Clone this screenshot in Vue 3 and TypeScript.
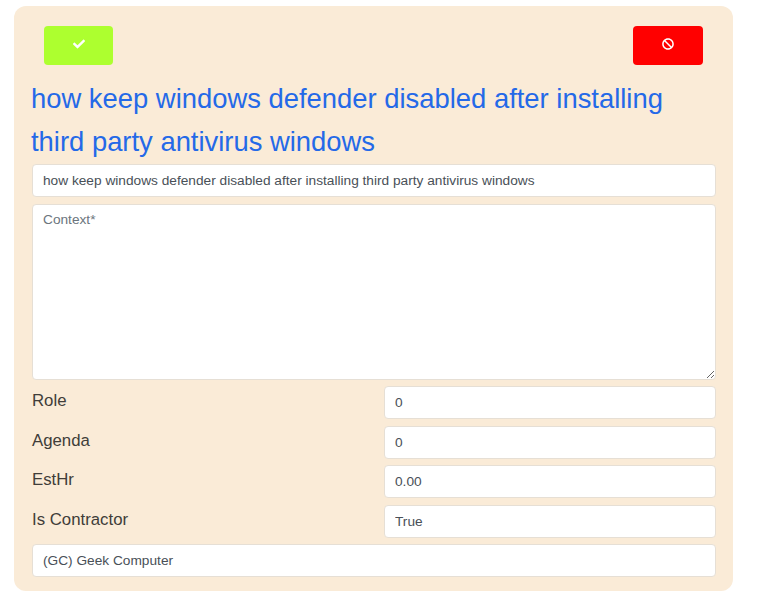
<script setup lang="ts">
const title = "how keep windows defender disabled after installing third party antivirus windows";

const fields = [
  { label: "Role", value: "0" },
  { label: "Agenda", value: "0" },
  { label: "EstHr", value: "0.00" },
  { label: "Is Contractor", value: "True" }
];
</script>

<template>
  <div class="page">
    <form class="card" @submit.prevent>
      <div class="actions">
        <button type="button" class="action-button approve">
          <svg class="icon" viewBox="0 0 512 512">
            <path d="M173.898 439.404l-166.4-166.4c-9.997-9.997-9.997-26.206 0-36.204l36.203-36.204c9.997-9.998 26.207-9.998 36.204 0L192 312.69 432.095 72.596c9.997-9.997 26.207-9.997 36.204 0l36.203 36.204c9.997 9.997 9.997 26.206 0 36.204l-294.4 294.401c-9.998 9.997-26.207 9.997-36.204-.001z" />
          </svg>
        </button>
        <button type="button" class="action-button reject">
          <svg class="icon" viewBox="0 0 512 512">
            <path d="M256 8C119.034 8 8 119.033 8 256s111.034 248 248 248 248-111.034 248-248S392.967 8 256 8zm130.108 117.892c65.448 65.448 70 165.481 20.677 235.637L150.47 105.216c70.204-49.356 170.226-44.735 235.638 20.676zM125.892 386.108c-65.448-65.448-70-165.481-20.677-235.637L361.53 406.784c-70.203 49.356-170.226 44.736-235.638-20.676z" />
          </svg>
        </button>
      </div>

      <h1 class="title">{{ title }}</h1>

      <input class="control subject" type="text" :value="title" />
      <textarea class="control context" placeholder="Context*"></textarea>

      <div v-for="field in fields" :key="field.label" class="field-row">
        <label class="field-label">{{ field.label }}</label>
        <input class="control" type="text" :value="field.value" />
      </div>

      <input class="control" type="text" value="(GC) Geek Computer" />
    </form>
  </div>
</template>

<style>
html,
body {
  background: #ffffff;
}
</style>

<style scoped>
.page {
  padding: 6px 35px 5px 14px;
  font-family: "Liberation Sans", Arial, sans-serif;
}

.card {
  display: flex;
  flex-direction: column;
  gap: 6.5px;
  padding: 20px 17px 14px 18px;
  background-color: #faebd7;
  border-radius: 12px;
}

.actions {
  display: flex;
  justify-content: space-between;
  padding: 0 13px 0 12px;
  margin-bottom: 5px;
}

.action-button {
  display: flex;
  justify-content: center;
  width: 70px;
  height: 39px;
  padding: 12px 0 0;
  border: none;
  border-radius: 4px;
}

.approve {
  width: 69px;
  background-color: #adff2f;
}

.reject {
  background-color: #ff0000;
}

.icon {
  width: 12px;
  height: 12px;
  fill: #ffffff;
}

.title {
  margin: 0 0 -5.5px -1px;
  font-size: 27.4px;
  font-weight: 400;
  line-height: 43px;
  color: #2469e8;
}

.control {
  display: block;
  box-sizing: border-box;
  width: 100%;
  height: 33px;
  padding: 0 10px;
  font-family: inherit;
  font-size: 13.7px;
  color: #495057;
  background-color: #ffffff;
  border: 1px solid #e6dfd5;
  border-radius: 4px;
  outline: none;
}

.subject {
  margin-bottom: 0.5px;
}

.context {
  height: 176px;
  padding-top: 7px;
  resize: vertical;
}

.context::placeholder {
  color: #6c757d;
  opacity: 1;
}

.field-row {
  display: grid;
  grid-template-columns: 352px 1fr;
}

.field-label {
  font-size: 16.8px;
  line-height: 30px;
  color: #403d39;
}
</style>
